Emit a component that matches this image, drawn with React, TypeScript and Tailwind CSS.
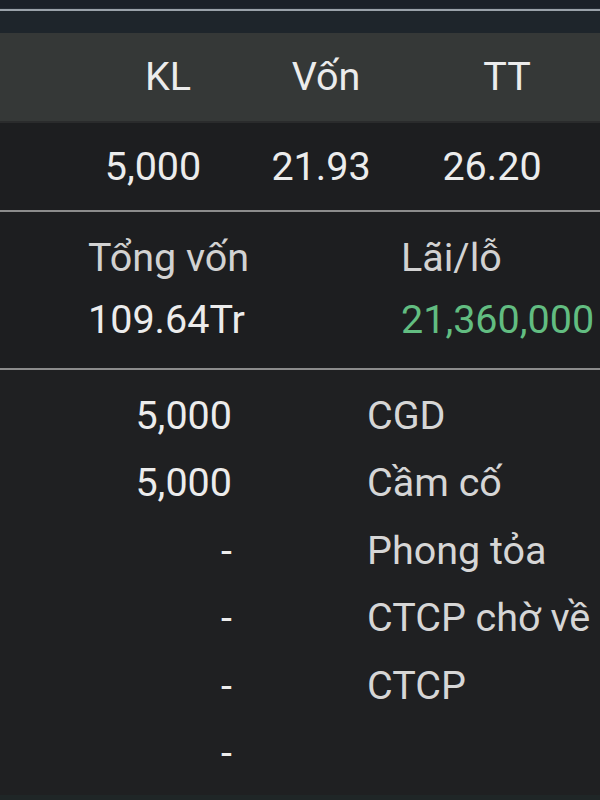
import React from "react";

const holdings = [
  { qty: "5,000", label: "CGD" },
  { qty: "5,000", label: "Cầm cố" },
  { qty: "-", label: "Phong tỏa" },
  { qty: "-", label: "CTCP chờ về" },
  { qty: "-", label: "CTCP" },
  { qty: "-", label: "" },
];

const App = () => (
  <div
    className="w-[600px] h-[800px] overflow-hidden flex flex-col bg-[#1f2022] text-[39.5px] leading-[44px] text-[#ececec]"
    style={{ fontFamily: "Roboto, 'Noto Sans', sans-serif" }}
  >
    {/* top strip */}
    <div className="h-[9px] bg-[#1b2129] border-b border-[#252c35]" />
    <div className="h-[2px] bg-[#9aa2aa]" />
    <div className="h-[22px] bg-[#1e252b]" />

    {/* header */}
    <div className="h-[88px] bg-[#353837] flex items-center whitespace-nowrap">
      <div className="w-[100px]" />
      <div className="w-[136px] text-center">KL</div>
      <div className="w-[180px] text-center">Vốn</div>
      <div className="w-[182px] text-center">TT</div>
    </div>
    <div className="h-[2px] bg-[#2a2b2c]" />

    {/* values */}
    <div className="h-[87px] bg-[#1d1e20] flex items-center whitespace-nowrap">
      <div className="w-[90px]" />
      <div className="w-[126px] text-center">5,000</div>
      <div className="w-[210px] text-center">21.93</div>
      <div className="w-[132px] text-center">26.20</div>
    </div>
    <div className="h-[2px] bg-[#8c8c8c]" />

    {/* totals */}
    <div className="h-[156px] bg-[#1d1e20] pt-[15px] pl-[88px] grid grid-cols-[313px_1fr] auto-rows-[62px] items-center whitespace-nowrap">
      <div className="text-[#d2d2d2]">Tổng vốn</div>
      <div className="text-[#d2d2d2]">Lãi/lỗ</div>
      <div>109.64Tr</div>
      <div className="text-[#62bd81]">21,360,000</div>
    </div>
    <div className="h-[2px] bg-[#8c8c8c]" />

    {/* breakdown */}
    <div className="flex-1 pt-[12px] flex flex-col">
      {holdings.map((h, i) => (
        <div key={i} className="h-[67.5px] shrink-0 flex items-center whitespace-nowrap">
          <div className="w-[232px] text-right">{h.qty}</div>
          <div className="pl-[135px] text-[#d6d6d6]">{h.label}</div>
        </div>
      ))}
    </div>
    <div className="h-[5px] bg-[#1f2627]" />
  </div>
);

export default App;
